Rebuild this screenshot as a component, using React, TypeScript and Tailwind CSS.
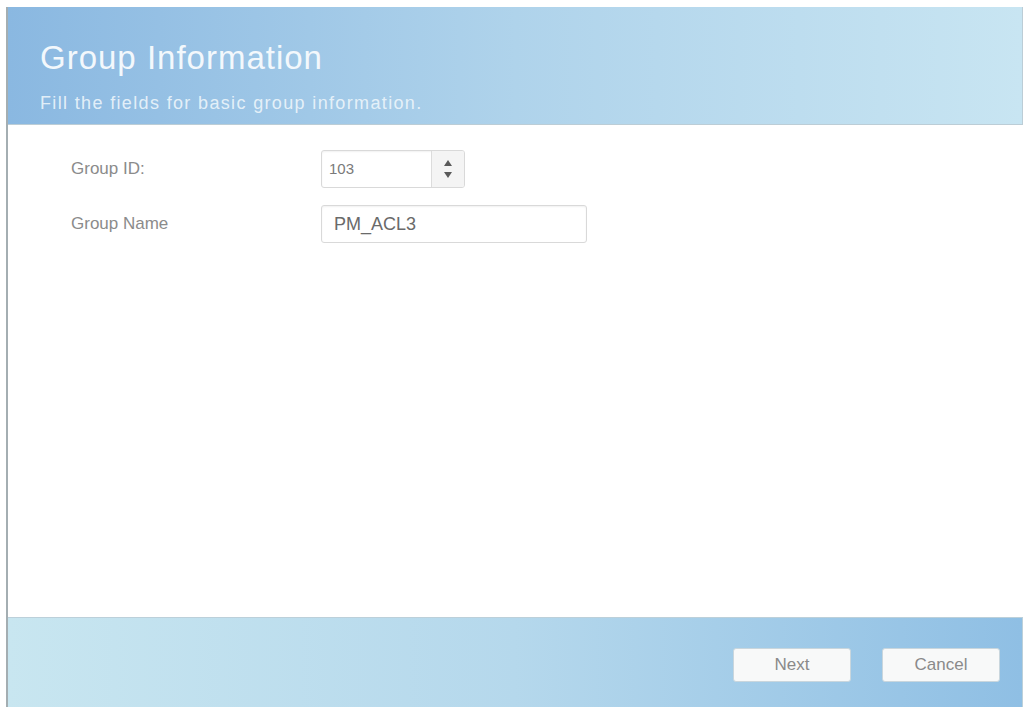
import React from 'react';

function Spinner() {
  return (
    <div className="flex w-[33px] flex-col items-center justify-center gap-[6px] border-l border-[#dcdcdc] bg-[#f4f4f4]">
      <svg width="8" height="6" viewBox="0 0 8 6">
        <path d="M4 0 L8 6 L0 6 Z" fill="#5a5a5a" />
      </svg>
      <svg width="8" height="6" viewBox="0 0 8 6">
        <path d="M0 0 L8 0 L4 6 Z" fill="#5a5a5a" />
      </svg>
    </div>
  );
}

export default function App() {
  return (
    <div className="h-[707px] w-full overflow-hidden bg-white pl-[6px] pr-[3px] pt-[7px] font-['Liberation_Sans',Arial,sans-serif]">
      <div className="flex h-[700px] flex-col border-l-2 border-[#a4aeb2]">
        <header className="h-[118px] border-b border-r border-[#bccdd6] bg-gradient-to-r from-[#8ab8e1] via-[#afd3eb] to-[#c8e5f2] pl-[32px] pt-[34px]">
          <h1 className="text-[33px] leading-none tracking-[1px] text-[#f3f8fc]">Group Information</h1>
          <p className="mt-[20px] text-[18px] leading-none tracking-[1.35px] text-[#eef6fb]/90">
            Fill the fields for basic group information.
          </p>
        </header>

        <main className="flex-1 bg-white pl-[63px] pt-[25px]">
          <div className="grid grid-cols-[250px_auto] items-center gap-y-[17px] text-[17px] text-[#8b8b8b]">
            <span>Group ID:</span>
            <div className="flex h-[38px] w-[144px] overflow-hidden rounded-[3px] border border-[#d9d9d9] shadow-[inset_0_1px_2px_rgba(0,0,0,0.06)]">
              <span className="flex flex-1 items-center pl-[7px] text-[15px] text-[#7a7a7a]">103</span>
              <Spinner />
            </div>

            <span>Group Name</span>
            <div className="flex h-[38px] w-[266px] items-center rounded-[3px] border border-[#d9d9d9] pl-[12px] text-[18px] text-[#6a6a6a] shadow-[inset_0_1px_2px_rgba(0,0,0,0.06)]">
              PM_ACL3
            </div>
          </div>
        </main>

        <footer className="flex h-[90px] items-start justify-end gap-[31px] border-r border-t border-[#bcd0da] bg-gradient-to-r from-[#c8e6f0] via-[#b5d8ec] to-[#8fbfe4] pr-[22px] pt-[30px]">
          <button className="h-[34px] w-[118px] rounded-[3px] border border-[#c9d6dd] bg-[#f8f9f9] text-[17px] text-[#8a8a8a]">
            Next
          </button>
          <button className="h-[34px] w-[118px] rounded-[3px] border border-[#c9d6dd] bg-[#f8f9f9] text-[17px] text-[#8a8a8a]">
            Cancel
          </button>
        </footer>
      </div>
    </div>
  );
}
